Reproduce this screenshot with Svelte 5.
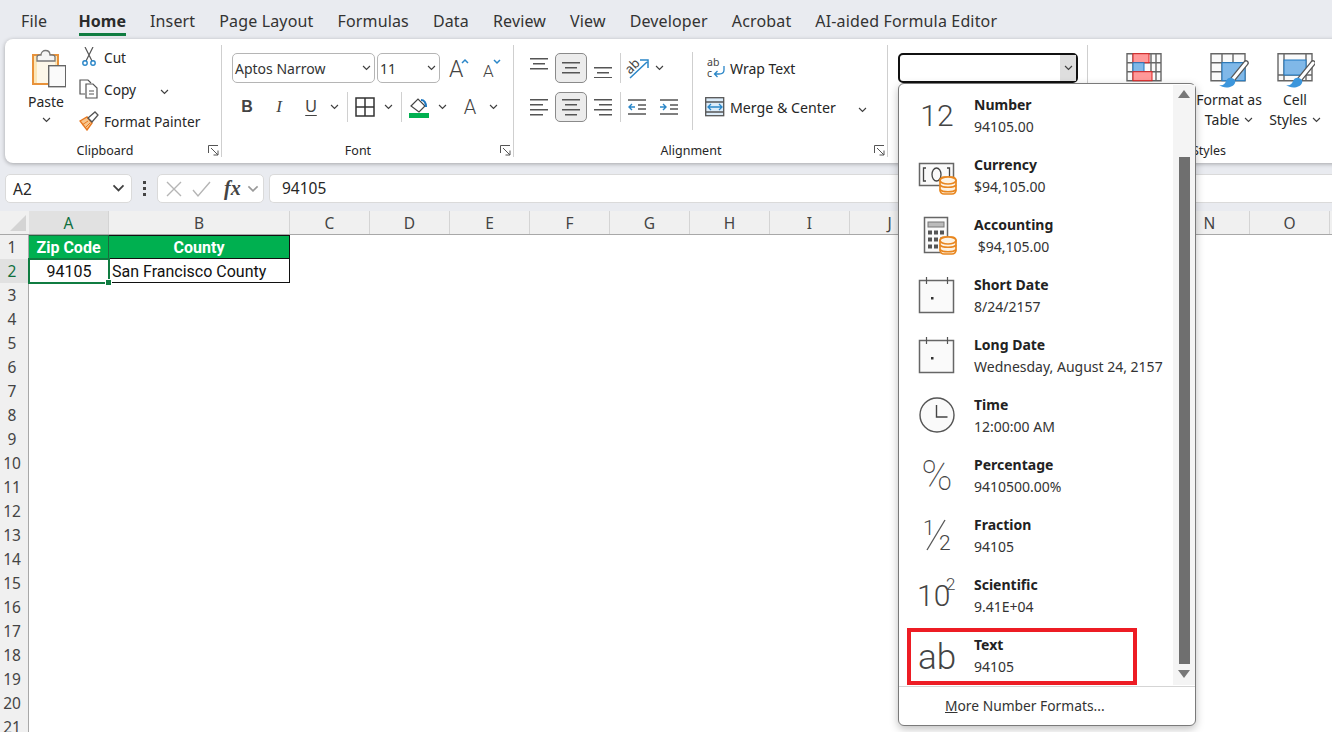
<script>
  const tabs = ['File', 'Home', 'Insert', 'Page Layout', 'Formulas', 'Data', 'Review', 'View', 'Developer', 'Acrobat', 'AI-aided Formula Editor'];
  const columns = ['C', 'D', 'E', 'F', 'G', 'H', 'I', 'J', 'K', 'L', 'M', 'N', 'O'];
  const rows = Array.from({ length: 21 }, (_, i) => i + 1);
  const formats = [
    { name: 'Number', sample: '94105.00', icon: 'number' },
    { name: 'Currency', sample: '$94,105.00', icon: 'currency' },
    { name: 'Accounting', sample: ' $94,105.00', icon: 'accounting' },
    { name: 'Short Date', sample: '8/24/2157', icon: 'date' },
    { name: 'Long Date', sample: 'Wednesday, August 24, 2157', icon: 'date' },
    { name: 'Time', sample: '12:00:00 AM', icon: 'time' },
    { name: 'Percentage', sample: '9410500.00%', icon: 'percent' },
    { name: 'Fraction', sample: '94105', icon: 'fraction' },
    { name: 'Scientific', sample: '9.41E+04', icon: 'scientific' },
    { name: 'Text', sample: '94105', icon: 'text' }
  ];
</script>

{#snippet chev(w = 9, color = '#404040')}
  <svg class="chev" width={w} height={w * 0.66} viewBox="0 0 9 6"><path d="M1 1l3.500 3.500L8 1" fill="none" stroke={color} stroke-width="1.2" /></svg>
{/snippet}

{#snippet launcher()}
  <svg class="launcher" width="11" height="11" viewBox="0 0 11 11"><path d="M.5 8V.5H10M3 3l7 7M10 5.500V10H5.500" fill="none" stroke="#555" stroke-width="1" /></svg>
{/snippet}

{#snippet lines(bars)}
  <svg width="20" height="20" viewBox="0 0 20 20">
    {#each bars as b}
      <rect x={b[0]} y={b[2]} width={b[1]} height="1.500" fill="#555" />
    {/each}
  </svg>
{/snippet}

{#snippet coins(x, y)}
  <g fill="#fdf3e3" stroke="#e8861f" stroke-width="1.700">
    <rect x={x - 8} y={y} width="16" height="17" rx="4" />
    <ellipse cx={x} cy={y + 3.500} rx="8" ry="3.500" />
    <path d="M{x - 8} {y + 8}c2 3 14 3 16 0M{x - 8} {y + 12.500}c2 3 14 3 16 0" fill="none" />
  </g>
{/snippet}

{#snippet brush()}
  <path d="M37 10L24 26" stroke="#555" stroke-width="5.500" stroke-linecap="round" />
  <path d="M37 10L24 26" stroke="#fff" stroke-width="3" stroke-linecap="round" />
  <path d="M10 32c4 1 6-1 7-4 1-3 4-4 6-3 3 1 4 3 3 5-2 5-11 6-16 2z" fill="#3c96dc" />
{/snippet}

<div class="window">
  <nav class="tabs">
    {#each tabs as tab}
      <span class="tab" class:active={tab === 'Home'}>{tab}</span>
    {/each}
  </nav>

  <section class="ribbon">
    <div class="group clipboard">
      <div class="body clip-body">
        <div class="paste">
          <svg width="40" height="40" viewBox="0 0 40 40">
            <rect x="7" y="6" width="25" height="29" fill="#fbe6b8" stroke="#e8923a" stroke-width="2" />
            <rect x="11" y="10" width="18" height="24" fill="#fdf7e9" />
            <path d="M11 12V8c0-1 1-2 3-2h1c0-6 9-6 9 0h2c2 0 3 1 3 2v4z" fill="#f5f5f5" stroke="#777" stroke-width="1.300" />
            <rect x="22.700" y="16.700" width="17" height="21" fill="#fafafa" stroke="#666" stroke-width="1.400" />
          </svg>
          <span>Paste</span>
          {@render chev()}
        </div>
        <div class="clip-rows">
          <div class="clip-row">
            <svg width="20" height="20" viewBox="0 0 20 20"><path d="M6 0l7 14M14 0L7 14" fill="none" stroke="#555" stroke-width="1.200" /><circle cx="6" cy="16" r="2.200" fill="none" stroke="#2a86c8" stroke-width="1.400" /><circle cx="14" cy="16" r="2.200" fill="none" stroke="#2a86c8" stroke-width="1.400" /></svg>
            <span>Cut</span>
          </div>
          <div class="clip-row">
            <svg width="20" height="20" viewBox="0 0 20 20"><path d="M6 15H1V1h8l3 3" fill="#fff" stroke="#555" stroke-width="1.200" /><path d="M7 5h7l4 4v10H7z" fill="#fff" stroke="#555" stroke-width="1.200" /><path d="M10 12h5M10 15h5" stroke="#555" /></svg>
            <span>Copy</span>
            <span class="copy-chev">{@render chev()}</span>
          </div>
          <div class="clip-row">
            <svg width="20" height="20" viewBox="0 0 20 20"><path d="M1 10l7-4 5 6-5 7z" fill="#f8c58c" stroke="#e8781f" stroke-width="1.400" /><path d="M9 7l7-6 3 3-6 7z" fill="#fff" stroke="#555" stroke-width="1.300" /><path d="M3 14l6-4M6 17l5-5" stroke="#e8781f" /></svg>
            <span>Format Painter</span>
          </div>
        </div>
      </div>
      <div class="label">Clipboard</div>
      {@render launcher()}
    </div>

    <div class="group font">
      <div class="body">
        <div class="row first">
          <div class="select font-name"><span>Aptos Narrow</span>{@render chev()}</div>
          <div class="select font-size"><span>11</span>{@render chev()}</div>
          <div class="ib w32">
            <svg width="26" height="22" viewBox="0 0 26 22"><text x="4" y="20" class="grow">A</text><path d="M17 6l3-3 3 3" fill="none" stroke="#2a86c8" stroke-width="1.500" /></svg>
          </div>
          <div class="ib w32">
            <svg width="26" height="22" viewBox="0 0 26 22"><text x="6" y="20" class="shrink">A</text><path d="M17 3l3 3 3-3" fill="none" stroke="#2a86c8" stroke-width="1.500" /></svg>
          </div>
        </div>
        <div class="row">
          <span class="ib w32 fs-b">B</span>
          <span class="ib w32 fs-i">I</span>
          <span class="ib w32 fs-u">U</span>
          <div class="ib w14">{@render chev()}</div>
          <div class="ib w12"><i class="rule"></i></div>
          <div class="ib w24">
            <svg width="20" height="20" viewBox="0 0 20 20"><path d="M1 1h18v18H1zM10 1v18M1 10h18" fill="none" stroke="#333" stroke-width="1.500" /></svg>
          </div>
          <div class="ib w22">{@render chev()}</div>
          <div class="ib w4"><i class="rule"></i></div>
          <div class="ib w32">
            <svg width="22" height="22" viewBox="0 0 22 22"><path d="M3 10l7-7 7 7-6 6z" fill="#fff" stroke="#444" stroke-width="1.200" /><path d="M13 4c3 0 5 3 5 7" fill="none" stroke="#1f78c1" stroke-width="2.200" /><rect x="1" y="17" width="20" height="5" fill="#00b050" /></svg>
          </div>
          <div class="ib w14">{@render chev()}</div>
          <span class="ib w30 font-a">A</span>
          <div class="ib w16">{@render chev()}</div>
        </div>
      </div>
      <div class="label">Font</div>
      {@render launcher()}
    </div>

    <div class="group alignment">
      <div class="align-body">
        <div class="body align-left">
          <div class="row first">
            <div class="ib w32">{@render lines([[1, 18, 0], [4, 12, 5], [1, 18, 10]])}</div>
            <div class="ib w32 pressed">{@render lines([[1, 18, 4], [4, 12, 9], [1, 18, 14]])}</div>
            <div class="ib w32">{@render lines([[1, 18, 9], [4, 12, 14], [1, 18, 19]])}</div>
            <div class="ib w2"><i class="rule"></i></div>
            <div class="ib w32">
              <svg width="24" height="24" viewBox="0 0 24 24"><path d="M5 22L22 6M15 4h8v8" fill="none" stroke="#2a86c8" stroke-width="1.500" /><text x="0" y="15" class="mini wide" transform="rotate(-45 7 11)">ab</text></svg>
            </div>
            <div class="ib w12">{@render chev()}</div>
          </div>
          <div class="row">
            <div class="ib w32">{@render lines([[1, 18, 2], [1, 13, 7], [1, 18, 12], [1, 13, 17]])}</div>
            <div class="ib w32 pressed">{@render lines([[1, 18, 2], [4, 12, 7], [1, 18, 12], [4, 12, 17]])}</div>
            <div class="ib w32">{@render lines([[1, 18, 2], [6, 13, 7], [1, 18, 12], [6, 13, 17]])}</div>
            <div class="ib w2"><i class="rule"></i></div>
            <div class="ib w32">
              <svg width="20" height="20" viewBox="0 0 20 20"><path d="M1 3h18M11 8h8M11 12h8M1 17h18" stroke="#555" stroke-width="1.300" /><path d="M8 10H2M5 7l-3 3 3 3" fill="none" stroke="#2a86c8" stroke-width="1.400" /></svg>
            </div>
            <div class="ib w32">
              <svg width="20" height="20" viewBox="0 0 20 20"><path d="M1 3h18M11 8h8M11 12h8M1 17h18" stroke="#555" stroke-width="1.300" /><path d="M1 10h6M4 7l3 3-3 3" fill="none" stroke="#2a86c8" stroke-width="1.400" /></svg>
            </div>
          </div>
        </div>
        <i class="tall-rule"></i>
        <div class="body align-right">
          <div class="row first wrap">
            <svg width="20" height="22" viewBox="0 0 20 22"><text x="1" y="9" class="mini">ab</text><text x="1" y="20" class="mini">c</text><path d="M18 9v4c0 3-2 4-5 4H9M11.500 14L8.500 17l3 3" fill="none" stroke="#2a86c8" stroke-width="1.300" /></svg>
            <span>Wrap Text</span>
          </div>
          <div class="row merge">
            <svg width="20" height="20" viewBox="0 0 20 20"><rect x=".7" y=".7" width="18" height="18" fill="#dcecf9" stroke="#555" stroke-width="1.300" /><path d="M1 5h18M1 15h18" stroke="#555" stroke-width="1.300" /><path d="M3 10h14M6 7l-3 3 3 3M14 7l3 3-3 3" fill="none" stroke="#2a86c8" stroke-width="1.300" /></svg>
            <span>Merge &amp; Center</span>
            <span class="merge-chev">{@render chev()}</span>
          </div>
        </div>
      </div>
      <div class="label">Alignment</div>
      {@render launcher()}
    </div>

    <div class="group number">
      <div class="combo">
        <span class="combo-btn">{@render chev()}</span>
      </div>
    </div>

    <div class="group styles">
      <div class="style-cols">
        <div class="style-col cond">
          <svg width="36" height="37" viewBox="0 0 36 37"><path d="M1 .7h34v27H1zM1 9.700h34M1 18.700h34M7 1v27M25 1v27M30 1v27" fill="#fafafa" stroke="#666" stroke-width="1.400" /><rect x="7" y=".7" width="16" height="9" fill="#f99" stroke="#d22" /><rect x="7" y="9.700" width="11" height="9" fill="#80b8e8" stroke="#1f78c1" /><rect x="7" y="18.700" width="19" height="9" fill="#f99" stroke="#d22" /></svg>
          <span>Conditional</span>
          <span>Formatting {@render chev()}</span>
        </div>
        <div class="style-col fat">
          <svg width="40" height="37" viewBox="0 0 40 37"><path d="M2 .7h34v27H2zM2 9.700h34M2 18.700h34M13 1v27M24 1v27" fill="#fafafa" stroke="#666" stroke-width="1.400" /><rect x="13" y="9.700" width="23" height="18" fill="#80b8e8" stroke="#1f78c1" />{@render brush()}</svg>
          <span>Format as</span>
          <span>Table {@render chev()}</span>
        </div>
        <div class="style-col">
          <svg width="40" height="37" viewBox="0 0 40 37"><path d="M3 .7h34v27H3zM9 1v27M31 1v27M3 22h34" fill="#fafafa" stroke="#666" stroke-width="1.400" /><rect x="9" y="7" width="22" height="15" fill="#80b8e8" stroke="#1f78c1" /><g transform="translate(1 0)">{@render brush()}</g></svg>
          <span>Cell</span>
          <span>Styles {@render chev()}</span>
        </div>
      </div>
      <div class="label">Styles</div>
    </div>
  </section>

  <section class="formula-bar">
    <div class="name-box"><span>A2</span>{@render chev(13)}</div>
    <div class="dots"><i></i><i></i><i></i></div>
    <div class="fx-box">
      <svg width="18" height="18" viewBox="0 0 18 18"><path d="M2 2l14 14M16 2L2 16" stroke="#b5b5b5" stroke-width="1.400" /></svg>
      <svg width="20" height="18" viewBox="0 0 20 18"><path d="M2 10l5 6L19 2" fill="none" stroke="#b5b5b5" stroke-width="1.400" /></svg>
      <span class="fx">fx</span>
      {@render chev(12, '#999')}
    </div>
    <div class="formula-input">94105</div>
  </section>

  <section class="sheet">
    <div class="col-heads">
      <div class="corner"><svg width="16" height="16" viewBox="0 0 16 16"><path d="M16 0v16H0z" fill="#d4d4d4" /></svg></div>
      <div class="col-head sel w80">A</div>
      <div class="col-head w181">B</div>
      {#each columns as col}
        <div class="col-head w80">{col}</div>
      {/each}
    </div>
    <div class="sheet-body">
      <div class="row-heads">
        {#each rows as n}
          <div class="row-head" class:sel={n === 2}>{n}</div>
        {/each}
      </div>
      <div class="cells">
        <div class="cell head a1">Zip Code</div>
        <div class="cell head">County</div>
        <div class="cell selected">94105<i class="handle"></i></div>
        <div class="cell county">San Francisco County</div>
      </div>
    </div>
  </section>

  <div class="dropdown">
    <div class="dd-main">
      <ul class="formats">
        {#each formats as f}
          <li class="format">
            <svg class="format-icon" width="40" height="40" viewBox="0 0 40 40">
              {#if f.icon === 'number'}
                <text x="20" y="31" text-anchor="middle" class="big">12</text>
              {:else if f.icon === 'currency'}
                <rect x="2.500" y="8.500" width="34" height="22" fill="#fafafa" stroke="#666" stroke-width="1.500" />
                <path d="M9 13H6.500v13H9M30 13h2.500v13H30" fill="none" stroke="#444" stroke-width="1.300" />
                <ellipse cx="19.500" cy="19.500" rx="4.500" ry="6.500" fill="none" stroke="#444" stroke-width="1.300" />
                {@render coins(31, 22)}
              {:else if f.icon === 'accounting'}
                <rect x="7.500" y="2.500" width="23" height="35" fill="#fafafa" stroke="#666" stroke-width="1.500" />
                <rect x="11" y="7" width="16" height="5" fill="#bbb" stroke="#777" />
                <g fill="#555">
                  {#each [0, 1, 2] as row}
                    {#each [0, 1, 2] as col}
                      <rect x={11 + col * 6} y={15.500 + row * 7} width="4" height="4" />
                    {/each}
                  {/each}
                </g>
                {@render coins(31, 22)}
              {:else if f.icon === 'date'}
                <rect x="2.500" y="5.500" width="34" height="32" fill="#fafafa" stroke="#666" stroke-width="1.500" />
                <path d="M9.500 2v7M30.500 2v7" fill="none" stroke="#555" stroke-width="1.200" />
                <rect x="14" y="22" width="2.500" height="2.500" fill="#333" />
              {:else if f.icon === 'time'}
                <circle cx="20" cy="20" r="17" fill="#fafafa" stroke="#555" stroke-width="1.400" />
                <path d="M19.500 10v12h11" fill="none" stroke="#444" stroke-width="1.400" />
              {:else if f.icon === 'percent'}
                <text x="20" y="35" text-anchor="middle" class="big pct">%</text>
              {:else if f.icon === 'fraction'}
                <text x="6" y="20" class="frac">1</text>
                <path d="M10 35L28 5" stroke="#555" stroke-width="1.300" />
                <text x="22" y="35" class="frac">2</text>
              {:else if f.icon === 'scientific'}
                <text x="0" y="31" class="big">10</text>
                <text x="29" y="15" class="frac sup">2</text>
              {:else}
                <text x="20" y="34" text-anchor="middle" class="big ab">ab</text>
              {/if}
            </svg>
            <div class="format-text">
              <b>{f.name}</b>
              <span>{f.sample}</span>
            </div>
          </li>
        {/each}
      </ul>
      <div class="scrollbar">
        <i class="arrow up"></i>
        <i class="thumb"></i>
        <i class="arrow down"></i>
      </div>
    </div>
    <div class="more"><span><u>M</u>ore Number Formats...</span></div>
    <div class="callout"></div>
  </div>
</div>

<style>
  :global(body) {
    overflow: hidden;
  }

  .window {
    position: relative;
    display: flex;
    flex-direction: column;
    width: 1332px;
    height: 732px;
    overflow: hidden;
    background: #e9ebf0;
    color: #262626;
    font-family: "Noto Sans", sans-serif;
    font-size: 14px;
  }

  i {
    display: block;
  }

  .tabs {
    display: flex;
    flex: none;
    gap: 24px;
    height: 39px;
    padding-left: 21px;
    box-sizing: border-box;
    font-size: 16px;
    letter-spacing: 0.15px;
    line-height: 42px;
    color: #333;
  }

  .tab {
    position: relative;
    white-space: nowrap;
  }

  .tab:first-child {
    margin-right: 7.400px;
  }

  .tab.active {
    font-weight: 700;
    letter-spacing: 0;
    color: #2b2b2b;
  }

  .tab.active::after {
    content: "";
    position: absolute;
    left: 0;
    right: 0;
    top: 33px;
    height: 3px;
    background: #107c41;
  }

  .ribbon {
    display: flex;
    flex: none;
    width: 1400px;
    height: 124px;
    margin-left: 5px;
    background: #fff;
    border-radius: 8px;
    box-shadow: 0 1px 4px rgba(0, 0, 0, 0.3);
  }

  .group {
    position: relative;
    flex: none;
    height: 100%;
    box-sizing: border-box;
  }

  .group::after {
    content: "";
    position: absolute;
    right: 0;
    top: 6px;
    bottom: 6px;
    width: 1px;
    background: #cfcfcf;
  }

  .clipboard { width: 217px; }
  .font { width: 292px; }
  .alignment { width: 374px; }
  .number { width: 200px; }
  .styles { width: 260px; }
  .styles::after { display: none; }

  .label {
    position: absolute;
    left: 0;
    right: 20px;
    bottom: 0;
    height: 24px;
    font-size: 12.500px;
    line-height: 24px;
    text-align: center;
  }

  .clipboard .label { right: 17px; }

  .styles .label {
    right: 0;
    width: 242px;
  }

  .launcher {
    position: absolute;
    right: 3px;
    bottom: 7px;
  }

  .body {
    display: flex;
    flex-direction: column;
    gap: 9px;
    padding: 14px 0 0 9px;
  }

  .row {
    display: flex;
    align-items: center;
    height: 30px;
  }

  .ib {
    display: flex;
    flex: none;
    align-items: center;
    justify-content: center;
    height: 30px;
    box-sizing: border-box;
  }

  .w2 { width: 2px; }
  .w4 { width: 4px; }
  .w12 { width: 12px; }
  .w14 { width: 14px; }
  .w16 { width: 16px; }
  .w22 { width: 22px; }
  .w24 { width: 24px; }
  .w30 { width: 30px; }
  .w32 { width: 32px; }
  .w80 { width: 80px; }
  .w181 { width: 181px; }

  .rule {
    flex: none;
    width: 1px;
    height: 30px;
    background: #d0d0d0;
  }

  .clip-body {
    flex-direction: row;
    gap: 13px;
    padding: 2px 0 0 21px;
  }

  .paste {
    display: flex;
    flex-direction: column;
    align-items: center;
    width: 40px;
    padding-top: 8px;
  }

  .paste span {
    line-height: 26px;
  }

  .paste .chev {
    margin-top: 2px;
  }

  .clip-rows {
    display: flex;
    flex-direction: column;
  }

  .clip-row {
    display: flex;
    align-items: center;
    gap: 5px;
    height: 32px;
    font-size: 13.700px;
    white-space: nowrap;
  }

  .copy-chev {
    margin-left: 19px;
  }

  .select {
    display: flex;
    flex: none;
    align-items: center;
    justify-content: space-between;
    height: 30px;
    padding: 0 3px 0 2px;
    box-sizing: border-box;
    border: 1px solid #b5b5b5;
    border-radius: 5px;
    color: #333;
  }

  .font-name {
    width: 143px;
    margin-right: 2px;
    margin-left: 1px;
  }

  .font-size {
    width: 63px;
    margin-right: 2px;
  }

  .grow, .shrink {
    font-family: Roboto, sans-serif;
    font-weight: 300;
    fill: #444;
  }

  .grow { font-size: 23px; }
  .shrink { font-size: 17px; }

  .fs-b, .fs-i, .fs-u {
    font-family: "Liberation Sans", sans-serif;
    font-size: 16px;
    color: #444;
  }

  .fs-b { font-weight: 700; }
  .fs-i { font-style: italic; font-family: "Liberation Serif", serif; font-size: 17px; }
  .fs-u { text-decoration: underline; text-underline-offset: 3px; }

  .font-a {
    margin-left: 6px;
    font-family: Roboto, sans-serif;
    font-size: 20px;
    font-weight: 300;
    color: #444;
  }

  .align-body {
    display: flex;
  }

  .align-left {
    width: 169px;
  }

  .pressed {
    background: #ececec;
    border: 1px solid #8a8a8a;
    border-radius: 5px;
  }

  .tall-rule {
    flex: none;
    width: 1px;
    height: 78px;
    margin-top: 13px;
    background: #cfcfcf;
  }

  .align-right {
    padding-left: 13px;
  }

  .wrap, .merge {
    gap: 4px;
    white-space: nowrap;
  }

  .merge {
    margin-left: -1px;
    gap: 5px;
  }

  .merge span:nth-child(2) {
    font-size: 14.200px;
  }

  .merge-chev {
    margin-left: 17px;
  }

  .mini {
    font-size: 10.500px;
    fill: #444;
  }

  .wide {
    font-size: 13px;
  }

  .combo {
    display: flex;
    justify-content: flex-end;
    width: 180px;
    height: 30px;
    margin: 14px 0 0 10px;
    box-sizing: border-box;
    border: 2px solid #111;
    border-radius: 5px;
    background: #fff;
  }

  .combo-btn {
    display: flex;
    align-items: center;
    justify-content: center;
    width: 16px;
    background: #dedede;
  }

  .style-cols {
    display: flex;
    padding: 14px 0 0 21px;
  }

  .style-col {
    display: flex;
    flex-direction: column;
    align-items: center;
    width: 60px;
    line-height: 20px;
    white-space: nowrap;
  }

  .style-col > span .chev {
    margin-left: 1px;
    vertical-align: 2px;
  }

  .cond { width: 70px; margin-right: 14px; }
  .fat { width: 72px; }

  .formula-bar {
    display: flex;
    flex: none;
    align-items: stretch;
    height: 29px;
    margin-top: 11px;
    font-size: 15.500px;
  }

  .name-box {
    display: flex;
    align-items: center;
    justify-content: space-between;
    width: 127px;
    margin-left: 5px;
    padding: 0 6px 0 7px;
    box-sizing: border-box;
    background: #fff;
    border: 1px solid #dadada;
    border-radius: 5px;
  }

  .dots {
    display: flex;
    flex-direction: column;
    align-items: center;
    justify-content: center;
    gap: 3px;
    width: 25px;
  }

  .dots i {
    width: 3px;
    height: 3px;
    background: #444;
  }

  .fx-box {
    display: flex;
    align-items: center;
    gap: 8px;
    width: 107px;
    padding-left: 7px;
    box-sizing: border-box;
    background: #fff;
    border: 1px solid #dadada;
    border-radius: 5px;
  }

  .fx {
    margin-left: 5px;
    margin-right: -2px;
    font-family: "Liberation Serif", serif;
    font-size: 20px;
    font-weight: 700;
    font-style: italic;
    color: #444;
  }

  .formula-input {
    flex: 1;
    margin-left: 5px;
    padding-left: 12px;
    background: #fff;
    border: 1px solid #dadada;
    border-right: 0;
    border-radius: 5px 0 0 5px;
    line-height: 27px;
  }

  .sheet {
    flex: 1;
    margin-top: 8px;
    min-height: 0;
    background: #fff;
  }

  .col-heads {
    display: flex;
    height: 24px;
    box-sizing: border-box;
    background: #f0f0f0;
    border-bottom: 1px solid #a8a8a8;
  }

  .corner {
    display: flex;
    flex: none;
    align-items: flex-end;
    justify-content: flex-end;
    width: 29px;
    padding: 0 3px 3px 0;
    box-sizing: border-box;
  }

  .col-head {
    flex: none;
    box-sizing: border-box;
    border-right: 1px solid #d4d4d4;
    text-align: center;
    line-height: 25px;
    font-size: 15.500px;
    color: #444;
  }

  .col-head.sel, .row-head.sel {
    background: #e1e1e1;
    color: #0f6f3e;
  }

  .sheet-body {
    display: flex;
  }

  .row-heads {
    flex: none;
    width: 29px;
    background: #f0f0f0;
    border-right: 1px solid #a8a8a8;
    box-sizing: border-box;
  }

  .row-head {
    height: 24px;
    padding-right: 4px;
    box-sizing: border-box;
    text-align: center;
    line-height: 24px;
    font-size: 15.500px;
    color: #444;
  }

  .cells {
    display: grid;
    grid-template-columns: 80px 181px;
    grid-auto-rows: 24px;
  }

  .cell {
    position: relative;
    box-sizing: border-box;
    font-family: Roboto, sans-serif;
    font-size: 16px;
    line-height: 25px;
    color: #111;
    white-space: nowrap;
  }

  .head {
    background: #00b050;
    border: 1px solid #111;
    border-left: 0;
    font-weight: 700;
    color: #fff;
    text-align: center;
    line-height: 24px;
  }

  .a1 {
    border-color: #1b6b3e;
  }

  .selected {
    outline: 2px solid #107c41;
    outline-offset: -1px;
    text-align: center;
    z-index: 1;
  }

  .handle {
    position: absolute;
    right: -3px;
    bottom: -3px;
    width: 5px;
    height: 5px;
    background: #107c41;
    border: 1px solid #fff;
  }

  .county {
    padding-left: 3px;
    border-right: 1px solid #111;
    border-bottom: 1px solid #111;
  }

  .dropdown {
    position: absolute;
    left: 898px;
    top: 83px;
    width: 298px;
    height: 643px;
    box-sizing: border-box;
    padding-top: 1px;
    background: #fff;
    border: 1px solid #7a7a7a;
    border-radius: 6px;
    box-shadow: 0 3px 8px rgba(0, 0, 0, 0.25);
    z-index: 5;
  }

  .dd-main {
    display: flex;
    height: 600px;
  }

  .formats {
    flex: none;
    width: 274px;
    margin: 0;
    padding: 0;
    list-style: none;
  }

  .format {
    display: flex;
    align-items: center;
    gap: 17px;
    height: 60px;
    padding-left: 18px;
  }

  .format-icon {
    flex: none;
  }

  .format-text {
    display: flex;
    flex-direction: column;
    padding-top: 2px;
    line-height: 22px;
    font-size: 14px;
    white-space: pre;
    color: #333;
  }

  .format-text b {
    color: #222;
    font-weight: 700;
  }

  .big {
    font-family: Roboto, sans-serif;
    font-size: 30px;
    font-weight: 300;
    fill: #444;
  }

  .pct { font-size: 42px; font-weight: 100; }
  .ab { font-size: 35px; }

  .frac {
    font-family: Roboto, sans-serif;
    font-size: 21px;
    font-weight: 300;
    fill: #444;
  }

  .sup { font-size: 17px; }

  .scrollbar {
    display: flex;
    flex-direction: column;
    align-items: center;
    width: 22px;
    background: #f4f4f4;
  }

  .arrow {
    flex: none;
    width: 0;
    height: 0;
    border-left: 6px solid transparent;
    border-right: 6px solid transparent;
  }

  .arrow.up {
    margin-top: 5px;
    border-bottom: 8px solid #777;
  }

  .arrow.down {
    margin-top: 6px;
    border-top: 8px solid #777;
  }

  .thumb {
    flex: none;
    width: 11px;
    height: 507px;
    margin-top: 59px;
    background: #6f6f6f;
  }

  .more {
    height: 39px;
    margin-top: 1px;
    padding-left: 46px;
    border-top: 1px solid #d5d5d5;
    font-size: 13.800px;
    line-height: 37px;
    color: #333;
  }

  .callout {
    position: absolute;
    left: 8px;
    top: 544px;
    width: 230px;
    height: 57px;
    box-sizing: border-box;
    border: 4px solid #ed1c24;
  }
</style>
